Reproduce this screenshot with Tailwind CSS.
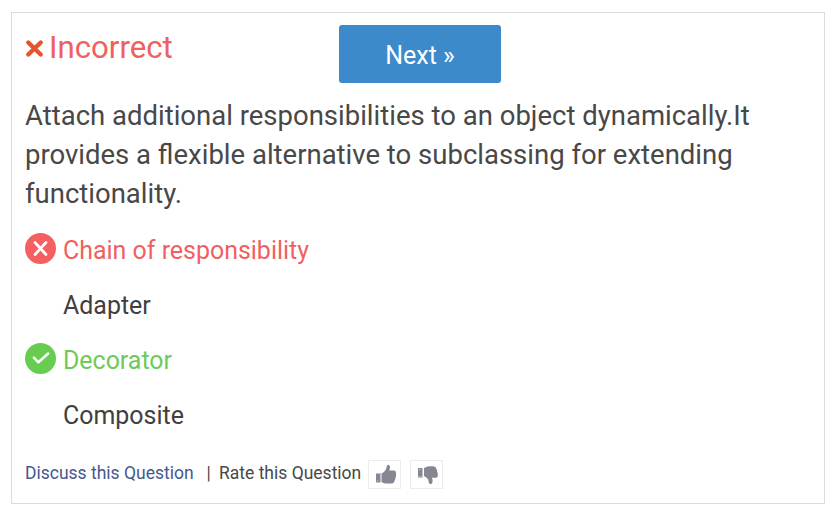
<!DOCTYPE html>
<html lang="en">
<head>
<meta charset="utf-8">
<title>Quiz question</title>
<script src="https://cdn.jsdelivr.net/npm/@tailwindcss/browser@4"></script>
</head>
<body class="bg-white font-['Roboto',sans-serif] text-[#484848]">
<main class="ml-[11px] mt-3 h-[492px] w-[814px] border border-[#dcdcdc] pl-[13px] pt-3">
  <header class="flex h-[58px] items-start">
    <div class="flex w-[314px] items-start text-[#f05f61]">
      <svg class="mt-[14px] h-[19px] w-[19px] shrink-0" viewBox="0 0 19 19" fill="none" stroke="#e5532f" stroke-width="4.4" stroke-linecap="round"><path d="M3.300 3.500l12.400 12M15.700 3.500l-12.400 12"/></svg>
      <h1 class="ml-[5px] whitespace-nowrap text-[31.2px] leading-[46px]">Incorrect</h1>
    </div>
    <button class="h-[58px] w-[162px] rounded-[3px] bg-[#3c8aca] pt-[6px] text-[25px] leading-[30px] pb-[2px] text-white">Next »</button>
  </header>
  <p class="mt-[13px] whitespace-nowrap text-[27.5px] leading-[39px]">Attach additional responsibilities to an object dynamically.It<br>provides a flexible alternative to subclassing for extending<br>functionality.</p>
  <ul class="mt-[9px] text-[24.95px] leading-[57px]">
    <li class="flex h-[55px] text-[#f05f61]">
      <svg class="mt-[11px] mr-[7px] h-[31px] w-[31px]" viewBox="0 0 31 31" fill="none"><circle cx="15.5" cy="15.5" r="15.5" fill="#f3605f"/><path d="M10 9.500l11 12M21 9.500l-11 12" stroke="#fff" stroke-width="2.7" stroke-linecap="round"/></svg>
      <span>Chain of responsibility</span>
    </li>
    <li class="h-[55px] pl-[38px] text-[#404040]">Adapter</li>
    <li class="flex h-[55px] text-[#6dca59]">
      <svg class="mt-[11px] mr-[7px] h-[31px] w-[31px]" viewBox="0 0 31 31" fill="none"><circle cx="15.5" cy="15.5" r="15.5" fill="#67cd50"/><path d="M8.900 14.700l4.500 4.600 9.800-8.800" stroke="#fff" stroke-width="2.500" stroke-linecap="round" stroke-linejoin="round"/></svg>
      <span>Decorator</span>
    </li>
    <li class="h-[55px] pl-[38px] text-[#404040]">Composite</li>
  </ul>
  <footer class="mt-[18px] flex h-[29px] items-start whitespace-nowrap text-[17.5px] leading-[26px]">
    <a class="w-[181.5px] text-[#45588f]">Discuss this Question</a>
    <span class="w-[12.5px]">|</span>
    <span class="w-[149px]">Rate this Question</span>
    <button class="h-[29px] w-[33px] border border-[#ececec]" aria-label="Like">
      <svg class="h-[27px] w-[31px]" viewBox="0 0 31 27" fill="#858793"><path d="M7 12h4.500v9.500H7zM12.500 12.500c2-1 3.500-2.500 4.500-4.500l1-3.500q.8-1.500 2.300-.3c1.200 1.500.8 3.300-.1 5.300h4.800q2.300.2 1.900 2.300.8 1.300 0 2.700.4 1.500-.5 2.500.2 1.500-.8 2.500-.2 2.700-3 3H17q-1.700 0-4.500-1.500z"/><path d="M7 12.500h4.500M8 20h1.500" stroke="#c4c5cc"/></svg>
    </button>
    <button class="ml-[9px] h-[29px] w-[33px] border border-[#ececec]" aria-label="Dislike">
      <svg class="h-[27px] w-[31px]" viewBox="0 0 31 27" fill="#858793"><path d="M7 7h4.500v9.500H7zM13 7q3-1.700 5.500-1.700h3.700q2.800.2 3.200 2.700 1 1 .7 2.500.9 1.200.5 2.500.7 1.300 0 2.500-.4 1.300-2 1.300h-3.800c1 2 1.200 4.300.1 5.600-1.500 1.200-2.500.5-3-.7l-.7-3.200q-1.500-2.500-4.200-3.500z"/><path d="M7 16h4.500M8 8.500h1.500" stroke="#c4c5cc"/></svg>
    </button>
  </footer>
</main>
</body>
</html>
